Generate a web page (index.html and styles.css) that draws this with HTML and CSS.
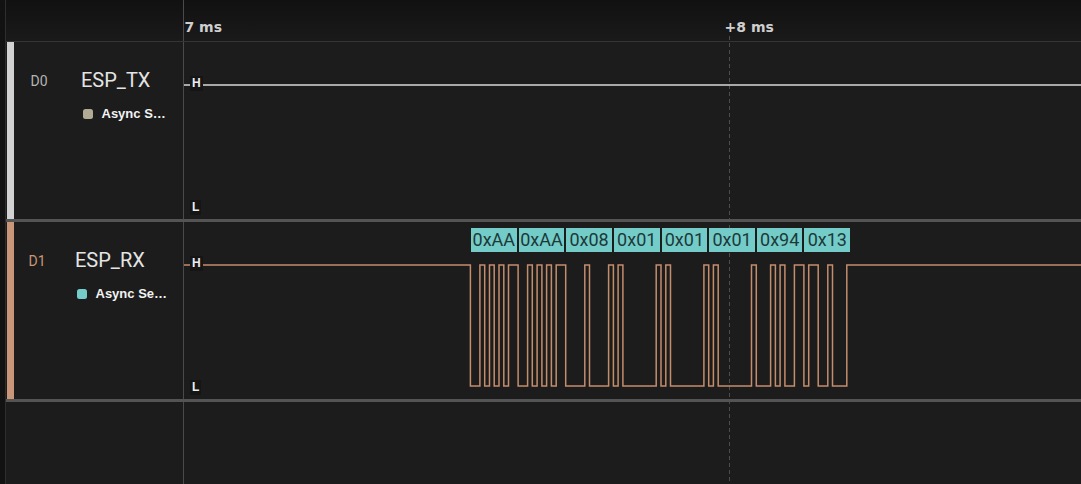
FILE: index.html
```html
<!DOCTYPE html>
<html lang="en">
<head>
<meta charset="utf-8">
<title>Logic analyzer</title>
<link rel="stylesheet" href="styles.css">
</head>
<body>
<div class="app">
  <div class="strip"></div>
  <div class="main">
    <div class="tick-line"></div>
    <header class="ruler">
      <div class="ruler-left"></div>
      <div class="ruler-canvas">
        <span class="tick-label" style="left:0.5px">7 ms</span>
        <span class="tick-label" style="left:540.6px">+8 ms</span>
      </div>
    </header>

    <section class="channel">
      <div class="channel-info">
        <div class="color-bar color-bar--d0"></div>
        <div class="chan-id chan-id--d0">D0</div>
        <div class="chan-meta">
          <div class="chan-name">ESP_TX</div>
          <div class="analyzer"><span class="dot dot--d0"></span><span>Async S…</span></div>
        </div>
      </div>
      <div class="channel-canvas">
        <svg class="wave" xmlns="http://www.w3.org/2000/svg">
          <g transform="translate(-184 -42)">
            <path class="trace trace--d0" d="M184 85 H1081"/>
          </g>
        </svg>
        <span class="level level--h">H</span>
        <span class="level level--l">L</span>
      </div>
    </section>

    <section class="channel">
      <div class="channel-info">
        <div class="color-bar color-bar--d1"></div>
        <div class="chan-id chan-id--d1">D1</div>
        <div class="chan-meta">
          <div class="chan-name">ESP_RX</div>
          <div class="analyzer"><span class="dot dot--d1"></span><span>Async Se…</span></div>
        </div>
      </div>
      <div class="channel-canvas">
        <svg class="wave" xmlns="http://www.w3.org/2000/svg">
          <g transform="translate(-184 -222)">
            <path class="trace trace--d1" d="M184 265 H470.4 V386 H479.9 V265 H484.7 V386 H489.5 V265 H494.2 V386 H499 V265 H503.8 V386 H508.5 V265 H518.1 V386 H527.6 V265 H532.3 V386 H537.1 V265 H541.9 V386 H546.6 V265 H551.4 V386 H556.2 V265 H565.7 V386 H584.8 V265 H589.5 V386 H608.6 V265 H613.4 V386 H618.1 V265 H622.9 V386 H656.2 V265 H661 V386 H665.8 V265 H670.5 V386 H703.9 V265 H708.7 V386 H713.4 V265 H718.2 V386 H751.5 V265 H756.3 V386 H770.6 V265 H775.4 V386 H780.1 V265 H784.9 V386 H794.4 V265 H803.9 V386 H808.7 V265 H818.2 V386 H827.8 V265 H832.5 V386 H846.8 V265 H1081"/>
          </g>
        </svg>
        <div class="frames">
          <span class="frame">0xAA</span>
          <span class="frame">0xAA</span>
          <span class="frame">0x08</span>
          <span class="frame">0x01</span>
          <span class="frame">0x01</span>
          <span class="frame">0x01</span>
          <span class="frame">0x94</span>
          <span class="frame">0x13</span>
        </div>
        <span class="level level--h">H</span>
        <span class="level level--l">L</span>
      </div>
    </section>

    <div class="filler">
      <div class="filler-left"></div>
      <div class="filler-canvas"></div>
    </div>
  </div>
</div>
</body>
</html>
```

FILE: styles.css
```css
* { box-sizing: border-box; }

html, body {
  margin: 0;
  padding: 0;
  background: #1c1c1c;
  overflow: hidden;
}

.app {
  display: flex;
  width: 1081px;
  height: 484px;
  background: #1c1c1c;
}

.strip {
  width: 6px;
  flex: none;
  background: #121212;
  border-right: 1px solid #2e2e2e;
}

.main {
  position: relative;
  flex: 1;
  display: flex;
  flex-direction: column;
  min-width: 0;
}

.tick-line {
  position: absolute;
  left: 723px;
  top: 36px;
  bottom: 0;
  width: 1px;
  background: repeating-linear-gradient(to bottom, #4c4c4c 0 4px, transparent 4px 7px);
}

/* ruler */
.ruler {
  display: flex;
  height: 42px;
  flex: none;
  background: linear-gradient(to bottom, #111111, #1a1a1a);
  border-bottom: 1px solid #353535;
}

.ruler-left {
  width: 178px;
  flex: none;
  border-right: 1px solid #4a4a4a;
}

.ruler-canvas {
  position: relative;
  flex: 1;
  overflow: hidden;
}

.tick-label {
  position: absolute;
  top: 19px;
  font: 700 14px/16px "DejaVu Sans", sans-serif;
  color: #cfcfcf;
  white-space: nowrap;
}

/* channels */
.channel {
  position: relative;
  display: flex;
  height: 180px;
  flex: none;
  border-bottom: 3px solid #545454;
}

.channel-info {
  display: flex;
  align-items: flex-start;
  width: 178px;
  flex: none;
  border-right: 1px solid #4a4a4a;
}

.color-bar {
  width: 7px;
  margin-left: 1px;
  align-self: stretch;
  flex: none;
}
.color-bar--d0 { background: #d2d2d2; }
.color-bar--d1 { background: #c9967a; }

.chan-id {
  flex: none;
  padding-top: 31px;
  font: 400 14px/16px "Roboto", sans-serif;
}
.chan-id--d0 { margin-left: 16.5px; width: 50.5px; color: #b4b4b4; }
.chan-id--d1 { margin-left: 14.5px; width: 46.5px; color: #c9967a; }

.chan-meta {
  padding-top: 26px;
}

.chan-name {
  font: 400 20px/24px "Roboto", sans-serif;
  color: #e4e4e4;
  white-space: nowrap;
}

.analyzer {
  display: flex;
  align-items: center;
  gap: 9px;
  margin-top: 14px;
  font: 700 13px/16px "Liberation Sans", sans-serif;
  color: #f2f2f2;
  white-space: nowrap;
}

.dot {
  width: 10px;
  height: 10px;
  margin-left: 1.5px;
  border-radius: 2.5px;
  flex: none;
}
.dot--d0 { background: #b1ab95; }
.dot--d1 { background: #74cdc9; }

.channel-canvas {
  position: relative;
  flex: 1;
  overflow: hidden;
}

.wave {
  position: absolute;
  left: 0;
  top: 0;
  width: 100%;
  height: 100%;
}

.trace {
  fill: none;
  stroke-linejoin: miter;
}
.trace--d0 { stroke: #d8d8d8; stroke-width: 1.6; }
.trace--d1 { stroke: #c48d6c; stroke-width: 1.5; }

.level {
  position: absolute;
  left: 6px;
  padding: 1px 2px;
  background: #151515;
  font: 700 12px/13px "Liberation Sans", sans-serif;
  color: #ededed;
}
.level--h { top: 34px; }
.level--l { top: 158px; }

.frames {
  position: absolute;
  left: 287px;
  top: 6px;
  display: flex;
  gap: 2px;
}

.frame {
  width: 45.65px;
  height: 24px;
  flex: none;
  background: #74ccc8;
  color: #1d3938;
  font: 400 18px/24px "Roboto", sans-serif;
  text-align: center;
  white-space: nowrap;
}

/* empty area below */
.filler {
  display: flex;
  flex: 1;
}
.filler-left {
  width: 178px;
  flex: none;
  border-right: 1px solid #4a4a4a;
}
.filler-canvas { flex: 1; }
```
